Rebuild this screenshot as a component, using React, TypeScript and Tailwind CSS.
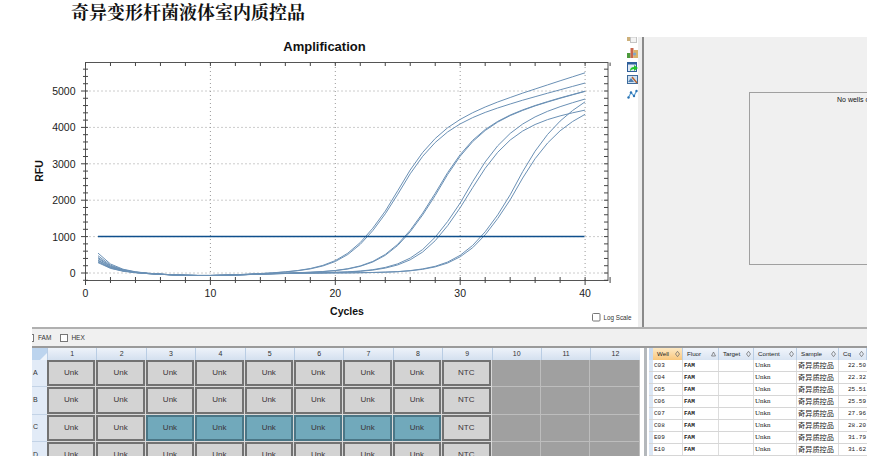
const wellColumns = Array.from({ length: 12 }, (_, i) => i + 1);

type Well = { label: string; selected?: boolean } | null;

function rowWells(selected: number[]): Well[] {
  return wellColumns.map((col) => {
    if (col > 9) return null;
    return { label: col === 9 ? "NTC" : "Unk", selected: selected.includes(col) };
  });
}

const plateRows: { name: string; wells: Well[] }[] = [
  { name: "A", wells: rowWells([]) },
  { name: "B", wells: rowWells([]) },
  { name: "C", wells: rowWells([3, 4, 5, 6, 7, 8]) },
  { name: "D", wells: rowWells([]) },
];

const resultRows = [
  ["C03", "22.50"],
  ["C04", "22.32"],
  ["C05", "25.51"],
  ["C06", "25.59"],
  ["C07", "27.96"],
  ["C08", "28.20"],
  ["E09", "31.79"],
  ["E10", "31.62"],
];

const curves = [
  { m: 24.4, a: 3800, s: 109, b: 550 },
  { m: 24.55, a: 3800, s: 92, b: 480 },
  { m: 27.6, a: 3900, s: 89, b: 430 },
  { m: 27.7, a: 3900, s: 89, b: 400 },
  { m: 30.1, a: 3950, s: 86, b: 360 },
  { m: 30.35, a: 3950, s: 57, b: 340 },
  { m: 33.7, a: 3900, s: 149, b: 310 },
  { m: 33.9, a: 3900, s: 100, b: 290 },
];

const xPos = (cycle: number) => 85.5 + cycle * 12.49;
const yPos = (rfu: number) => 273 - (rfu * 36.4) / 1000;

function curvePoints(c: (typeof curves)[number]) {
  const pts: string[] = [];
  for (let cycle = 1; cycle <= 40; cycle++) {
    const rise = c.a / (1 + Math.exp(-(cycle - c.m) / 1.9));
    const drift = c.s * Math.max(0, cycle - c.m);
    const start = c.b * Math.exp(-(cycle - 1) / 1.3);
    const dip = -70 * Math.exp(-(((cycle - 9.5) / 5) ** 2));
    pts.push(`${xPos(cycle).toFixed(1)},${yPos(rise + drift + start + dip).toFixed(1)}`);
  }
  return pts.join(" ");
}

function AmplificationChart() {
  const yTicks = Array.from({ length: 30 }, (_, i) => -200 + i * 200);
  const xTicks = Array.from({ length: 22 }, (_, i) => i * 2);
  return (
    <svg width={600} height={290} viewBox="32 37 600 290" className="block shrink-0">
      <text x={324.5} y={51} textAnchor="middle" fontSize={13} fontWeight={700} fontFamily="Liberation Sans, sans-serif" fill="#111">
        Amplification
      </text>
      <text x={347} y={315} textAnchor="middle" fontSize={10.5} fontWeight={700} fontFamily="Liberation Sans, sans-serif" fill="#111">
        Cycles
      </text>
      <text transform="translate(43 171) rotate(-90)" textAnchor="middle" fontSize={10.5} fontWeight={700} fontFamily="Liberation Sans, sans-serif" fill="#111">
        RFU
      </text>

      {[10, 20, 30, 40].map((c) => (
        <line key={c} x1={xPos(c)} x2={xPos(c)} y1={63} y2={280} stroke="#999" strokeDasharray="1 3" />
      ))}
      {[0, 1000, 2000, 3000, 4000, 5000].map((v) => (
        <line key={v} x1={85.5} x2={608} y1={yPos(v)} y2={yPos(v)} stroke="#999" strokeDasharray="1 3" />
      ))}

      <rect x={85.5} y={62.5} width={522.5} height={218} fill="none" stroke="#555" />

      {yTicks.map((v) => (
        <g key={v} stroke="#444">
          <line x1={v % 1000 === 0 ? 81 : 83} x2={88} y1={yPos(v)} y2={yPos(v)} />
          <line x1={604} x2={608} y1={yPos(v)} y2={yPos(v)} />
        </g>
      ))}
      {xTicks.map((c) => (
        <g key={c} stroke="#444">
          <line x1={xPos(c)} x2={xPos(c)} y1={62.5} y2={66} />
          <line x1={xPos(c)} x2={xPos(c)} y1={277} y2={c % 10 === 0 ? 285 : 283} />
        </g>
      ))}

      {[0, 1000, 2000, 3000, 4000, 5000].map((v) => (
        <text key={v} x={75.5} y={yPos(v) + 4} textAnchor="end" fontSize={10.5} fontFamily="Liberation Sans, sans-serif" fill="#222">
          {v}
        </text>
      ))}
      {[0, 10, 20, 30, 40].map((c) => (
        <text key={c} x={xPos(c)} y={297} textAnchor="middle" fontSize={10.5} fontFamily="Liberation Sans, sans-serif" fill="#222">
          {c}
        </text>
      ))}

      {curves.map((c) => (
        <polyline key={c.m} points={curvePoints(c)} fill="none" stroke="#6a90b5" strokeWidth={1} />
      ))}
      <line x1={98} x2={584.5} y1={236.5} y2={236.5} stroke="#0f4f8c" strokeWidth={1.4} />

      <rect x={592.5} y={313.5} width={7.5} height={7.5} rx={1} fill="#fff" stroke="#777" />
      <text x={603.5} y={319.5} fontSize={6.3} fontFamily="Liberation Sans, sans-serif" fill="#333">
        Log Scale
      </text>
    </svg>
  );
}

function ChartTools() {
  return (
    <div className="relative z-10 -ml-[6px] flex w-[12px] shrink-0 flex-col items-center">
      <svg width={10} height={6} viewBox="0 0 10 6" className="block">
        <rect x={0} y={0} width={4} height={4} fill="#cdb07a" />
        <rect x={3.5} y={0} width={6} height={5.5} fill="#f4f4f4" stroke="#c4c4c4" />
      </svg>
      <svg width={11} height={10} viewBox="0 0 11 10" className="mt-[5px] block">
        <rect x={0} y={5} width={3.5} height={5} fill="#4d9a3c" />
        <rect x={3.5} y={0} width={3} height={10} fill="#c8644a" />
        <rect x={6.5} y={2} width={4.5} height={8} fill="#d9b36a" />
        <circle cx={7.5} cy={6} r={1.6} fill="#7fa6c9" />
      </svg>
      <svg width={11} height={10} viewBox="0 0 11 10" className="mt-[4px] block">
        <rect x={0.5} y={0.5} width={9} height={9} fill="#dfe9f5" stroke="#2f5f9a" />
        <rect x={0.5} y={0.5} width={9} height={2} fill="#2f5f9a" />
        <path d="M3 9 Q3 5 7 5 L7 3 L11 6 L7 9 L7 7 Q5 7 3 9Z" fill="#22c32a" />
      </svg>
      <svg width={11} height={10} viewBox="0 0 11 10" className="mt-[3px] block">
        <rect x={0.5} y={0.5} width={10} height={8} fill="#cfe0f0" stroke="#3f6c9c" />
        <path d="M1 7 L4 3 L7 7Z" fill="#4f7fb0" />
        <path d="M5 2 L10 8" stroke="#b5622e" strokeWidth={1.4} />
      </svg>
      <svg width={11} height={10} viewBox="0 0 11 10" className="mt-[4px] block">
        <path d="M1.5 8.5 L4 3.5 L7 7 L9.5 2" fill="none" stroke="#5fa0d4" strokeWidth={1.2} />
        <circle cx={1.5} cy={8.5} r={1.2} fill="#2a73b4" />
        <circle cx={4} cy={3.5} r={1.2} fill="#2a73b4" />
        <circle cx={7} cy={7} r={1.2} fill="#2a73b4" />
        <circle cx={9.5} cy={2} r={1.2} fill="#2a73b4" />
      </svg>
    </div>
  );
}

function Plate() {
  return (
    <div className="h-[108px] w-[608px] shrink-0 overflow-hidden font-['Liberation_Sans',sans-serif]">
      <div className="flex h-[12px] bg-gradient-to-b from-[#eef3fa] to-[#d4e0ef]">
        <div className="flex w-[15px] shrink-0 items-end justify-end bg-[#bcd4ee]">
          <div className="h-0 w-0 border-b-[7px] border-l-[7px] border-b-[#eef4fb] border-l-transparent" />
        </div>
        {wellColumns.map((col) => (
          <div key={col} className="flex w-[49.4px] shrink-0 items-center justify-center border-l border-[#b9cde4] text-[7px] text-[#333]">
            {col}
          </div>
        ))}
      </div>
      {plateRows.map((row) => (
        <div key={row.name} className="flex h-[27.3px]">
          <div className="flex w-[15px] shrink-0 items-center border-b border-[#c3d3e6] bg-[#e2ebf7] pl-[1px] text-[7px] text-[#333]">
            {row.name}
          </div>
          {row.wells.map((well, i) =>
            well ? (
              <div key={i} className="w-[49.4px] shrink-0 border-b border-r border-[#d9d9d9]">
                <div
                  className={`flex h-full items-center justify-center border-2 text-[8px] text-[#3b3438] ${
                    well.selected ? "border-[#4a7686] bg-[#71a9bb]" : "border-[#727272] bg-[#d3d3d3]"
                  }`}
                >
                  {well.label}
                </div>
              </div>
            ) : (
              <div key={i} className="w-[49.4px] shrink-0 border-b border-r border-[#bdbdbd] bg-[#a0a0a0]" />
            ),
          )}
        </div>
      ))}
    </div>
  );
}

function SortMark({ up }: { up?: boolean }) {
  return (
    <svg width={5} height={6} viewBox="0 0 5 6" className="block shrink-0">
      {up ? (
        <path d="M2.5 1 L4.5 5 L0.5 5Z" fill="none" stroke="#666" strokeWidth={0.7} />
      ) : (
        <path d="M2.5 0.3 L4.5 3 L2.5 5.7 L0.5 3Z" fill="none" stroke="#666" strokeWidth={0.7} />
      )}
    </svg>
  );
}

const headerCols = [
  { label: "Well", width: "w-[30px]", active: true },
  { label: "Fluor", width: "w-[36px]", up: true },
  { label: "Target", width: "w-[35px]" },
  { label: "Content", width: "w-[43px]" },
  { label: "Sample", width: "w-[42px]" },
  { label: "Cq", width: "w-[28px]" },
];

function ResultsTable() {
  return (
    <div className="ml-[4px] min-w-0 flex-1 overflow-hidden border-l-[3px] border-[#b4b8bc] pl-[2px] font-['Liberation_Sans',sans-serif]">
      <div className="w-[218px]">
        <div className="flex h-[12px]">
          <div className="w-[4px] shrink-0 bg-[#c9daf0]" />
          {headerCols.map((col) => (
            <div
              key={col.label}
              className={`flex shrink-0 items-center justify-between border-r border-[#b9cde4] pl-[4px] pr-[2px] text-[6.2px] text-[#222] ${col.width} ${
                col.active ? "bg-gradient-to-b from-[#fde9c4] to-[#f9c77c]" : "bg-gradient-to-b from-[#f1f5fb] to-[#d9e4f2]"
              }`}
            >
              <span>{col.label}</span>
              <SortMark up={col.up} />
            </div>
          ))}
        </div>
        {resultRows.map(([well, cq]) => (
          <div key={well} className="flex h-[12px] items-center border-b border-[#d6d6d6] font-['Liberation_Mono',monospace] text-[6px] text-[#222]">
            <div className="h-full w-[4px] shrink-0 bg-[#dce7f5]" />
            <div className="flex h-full w-[30px] shrink-0 items-center border-r border-[#ddd] pl-[1px]">{well}</div>
            <div className="flex h-full w-[36px] shrink-0 items-center border-r border-[#ddd] pl-[1px] font-bold">FAM</div>
            <div className="h-full w-[35px] shrink-0 border-r border-[#ddd]" />
            <div className="flex h-full w-[43px] shrink-0 items-center border-r border-[#ddd] pl-[1px] font-['Liberation_Serif',serif] text-[7px]">Unkn</div>
            <div className="flex h-full w-[42px] shrink-0 items-center border-r border-[#ddd] pl-[1px] font-['Noto_Sans_CJK_SC',sans-serif] text-[7.2px]">奇异质控品</div>
            <div className="flex h-full w-[28px] shrink-0 items-center justify-end pr-[1px]">{cq}</div>
          </div>
        ))}
      </div>
    </div>
  );
}

export default function App() {
  return (
    <div className="h-[468px] w-[888px] overflow-hidden bg-white">
      <h1 className="h-[37px] pl-[71px] pt-[1px] font-['Noto_Serif_CJK_SC','Noto_Sans_CJK_SC',serif] text-[18px] font-bold leading-[21px] text-[#111]">
        奇异变形杆菌液体室内质控品
      </h1>

      <div className="ml-[32px] w-[835px]">
        <div className="flex h-[290px]">
          <AmplificationChart />
          <ChartTools />
          <div className="w-[4px] shrink-0 bg-[#eeeeee]" />
          <div className="flex min-w-0 flex-1 border-l-2 border-[#8a8a8a] bg-[#f0f0f0] pl-[105px] pt-[55px]">
            <div className="h-[173px] flex-1 overflow-hidden whitespace-nowrap border-b border-l border-t border-[#a0a0a0] pl-[87px] pt-[2px] font-['Liberation_Sans',sans-serif] text-[7px] text-[#111]">
              No wells detected
            </div>
          </div>
        </div>

        <div className="flex h-[19px] items-center overflow-hidden border-t-2 border-[#b0b0b0] bg-[#f0f0f0] font-['Liberation_Sans',sans-serif] text-[6.5px] text-[#333]">
          <span className="-ml-[6px] mr-[4px] h-[8px] w-[8px] shrink-0 border border-[#777] bg-white" />
          <span>FAM</span>
          <span className="ml-[9px] mr-[3px] h-[8px] w-[8px] shrink-0 border border-[#777] bg-white" />
          <span>HEX</span>
        </div>

        <div className="flex border-t-2 border-[#9a9a9a]">
          <Plate />
          <ResultsTable />
        </div>
      </div>
    </div>
  );
}
